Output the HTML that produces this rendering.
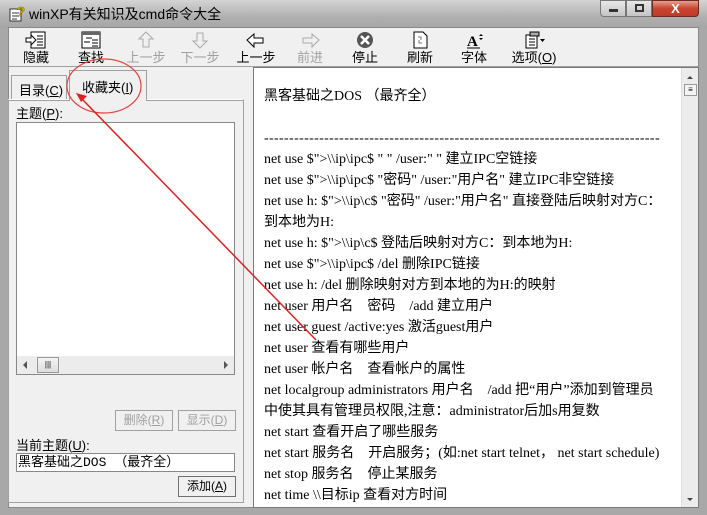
<!DOCTYPE html>
<html><head><meta charset="utf-8"><style>
*{margin:0;padding:0;box-sizing:border-box}
body{width:707px;height:515px;overflow:hidden;background:#a8a8a8;font-family:"Liberation Sans","Noto Sans CJK SC",sans-serif;font-size:12px;position:relative}
.abs{position:absolute}
#title{left:0;top:0;width:707px;height:28px;background:linear-gradient(#d4d4d4,#b0b0b0 60%,#a6a6a6)}
#client{left:8px;top:27px;width:691px;height:481px;background:#f0f0f0;border:1px solid #8a8a8a}
.tb{position:absolute;top:3px;text-align:center;font-size:13px;color:#000;width:50px}
.tb .lab{position:absolute;top:16px;left:0;width:100%}
.dis{color:#a0a0a0}
#content{left:253px;top:67px;width:446px;height:441px;background:#fff;border:1px solid #7a7a7a}
#txt{position:absolute;left:10px;top:18px;font-family:"Liberation Serif","Noto Sans CJK SC",serif;font-size:14px;line-height:21px;letter-spacing:0;color:#000;white-space:nowrap}
.sb{left:681px;top:68px;width:17px;height:439px;background:#ececec;border-left:1px solid #ddd}
.btn{position:absolute;height:21px;border:1px solid #a0a0a0;background:#f0f0f0;font-size:12px;text-align:center;line-height:19px}
</style></head><body>
<div class="abs" id="title"></div>
<svg class="abs" style="left:8px;top:5px" width="18" height="18"><rect x="2" y="4" width="11" height="12" fill="#fff" stroke="#333"/><path d="M4 8h7M4 11h7M4 14h5" stroke="#333"/><text x="9" y="11" font-size="13" font-weight="bold" fill="#e8c000" stroke="#6a5500" stroke-width=".5" font-family="Liberation Sans">?</text></svg>
<div class="abs" style="left:29px;top:4px;font-size:14px;color:#000">winXP有关知识及cmd命令大全</div>
<div class="abs" style="left:600px;top:0;width:26px;height:17px;border:1px solid #777;border-radius:0 0 0 4px;background:linear-gradient(#e8e8e8,#c4c4c4)"><div style="position:absolute;left:8px;top:8px;width:9px;height:3px;background:#333"></div></div>
<div class="abs" style="left:626px;top:0;width:26px;height:17px;border:1px solid #777;background:linear-gradient(#e8e8e8,#c4c4c4)"><div style="position:absolute;left:8px;top:3px;width:9px;height:8px;border:2px solid #333"></div></div>
<div class="abs" style="left:652px;top:0;width:47px;height:17px;border:1px solid #6a2a20;border-radius:0 0 4px 0;background:linear-gradient(#e8a090,#c84530 50%,#c03a28);color:#fff;font-weight:bold;text-align:center;font-size:13px;line-height:15px">X</div>
<div class="abs" id="client">
 <div class="tb" style="left:2px"><svg width="22" height="18"><rect x="6" y="1" width="14" height="16" fill="#fff" stroke="#000"/><path d="M12 5h6M12 8h6M12 11h6M12 14h6" stroke="#000"/><path d="M1 7h5V4l5 5-5 5v-3H1z" fill="#fff" stroke="#000"/></svg><div class="lab">隐藏</div></div>
 <div class="tb" style="left:57px"><svg width="22" height="18"><rect x="2" y="1" width="18" height="16" fill="#fff" stroke="#000"/><rect x="2" y="1" width="18" height="3" fill="#666"/><path d="M6 7h6M10 11h-6M12 9h6M12 12h6M12 15h6" stroke="#000"/></svg><div class="lab">查找</div></div>
 <div class="tb dis" style="left:112px"><svg width="22" height="18"><path d="M11 1l7 7h-4v8h-6v-8h-4z" fill="none" stroke="#aaa"/></svg><div class="lab">上一步</div></div>
 <div class="tb dis" style="left:166px"><svg width="22" height="18"><path d="M11 17l7-7h-4v-8h-6v8h-4z" fill="none" stroke="#aaa"/></svg><div class="lab">下一步</div></div>
 <div class="tb" style="left:222px"><svg width="22" height="18"><path d="M2 9l7-6v4h9v5h-9v4z" fill="#fff" stroke="#000"/></svg><div class="lab">上一步</div></div>
 <div class="tb dis" style="left:276px"><svg width="22" height="18"><path d="M20 9l-7-6v4h-9v5h9v4z" fill="none" stroke="#aaa"/></svg><div class="lab">前进</div></div>
 <div class="tb" style="left:331px"><svg width="22" height="18"><circle cx="11" cy="9" r="8" fill="#555"/><path d="M7 5l8 8M15 5l-8 8" stroke="#fff" stroke-width="2.5"/></svg><div class="lab">停止</div></div>
 <div class="tb" style="left:386px"><svg width="22" height="18"><path d="M5 1h9l4 4v12h-13z" fill="#fff" stroke="#000"/><path d="M9 6h3v3M13 12h-3v-3" stroke="#777" fill="none"/></svg><div class="lab">刷新</div></div>
 <div class="tb" style="left:440px"><svg width="22" height="18"><text x="4" y="15" font-size="15" font-family="Liberation Serif" font-weight="bold">A</text><path d="M4 17h13" stroke="#000"/><path d="M18 3l2 2h-4zM18 9l2-2h-4z" fill="#000"/></svg><div class="lab">字体</div></div>
 <div class="tb" style="left:495px;width:60px"><svg width="26" height="18"><rect x="5" y="4" width="11" height="13" fill="#fff" stroke="#000"/><path d="M8 8h6M8 11h6M8 14h6" stroke="#000"/><rect x="9" y="1" width="9" height="4" fill="#aaa" stroke="#000"/><path d="M19 8h5l-2.5 3z" fill="#000"/></svg><div class="lab">选项(<u>O</u>)</div></div>
 <div style="position:absolute;left:0;top:38px;width:689px;height:1px;background:#a0a0a0"></div>
</div>
<div class="abs" style="left:11px;top:75px;width:56px;height:24px;border:1px solid #a0a0a0;border-bottom:none;background:#f0f0f0;font-size:13px;padding:4px 0 0 7px">目录(<u>C</u>)</div>
<div class="abs" style="left:69px;top:70px;width:78px;height:31px;border:1px solid #a0a0a0;border-bottom:none;background:#f0f0f0;font-size:13px;padding:6px 0 0 12px;z-index:2">收藏夹(<u>I</u>)</div>
<div class="abs" style="left:8px;top:99px;width:236px;height:404px;border:1px solid #a0a0a0;border-top:1px solid #fff;box-shadow:inset 0 1px 0 #a0a0a0"></div>
<div class="abs" style="left:16px;top:103px;font-size:13px">主题(<u>P</u>):</div>
<div class="abs" style="left:16px;top:122px;width:219px;height:253px;background:#fff;border:1px solid #888"></div>
<div class="abs" style="left:17px;top:356px;width:217px;height:18px;background:#ececec"><div style="position:absolute;left:20px;top:1px;width:22px;height:16px;border:1px solid #999;background:linear-gradient(#f4f4f4,#ddd);font-size:8px;text-align:center;line-height:14px">|||</div><div style="position:absolute;left:6px;top:5px;border:4px solid transparent;border-right-color:#555;border-left:0"></div><div style="position:absolute;right:6px;top:5px;border:4px solid transparent;border-left-color:#555;border-right:0"></div></div>
<div class="btn" style="left:115px;top:410px;width:58px;color:#a0a0a0">删除(<u>R</u>)</div>
<div class="btn" style="left:178px;top:410px;width:58px;color:#a0a0a0">显示(<u>D</u>)</div>
<div class="abs" style="left:16px;top:435px;font-size:13px">当前主题(<u>U</u>):</div>
<div class="abs" style="left:16px;top:453px;width:219px;height:19px;background:#fff;border:1px solid #888;font-size:13px;line-height:17px;padding-left:1px;font-family:'Liberation Mono','Noto Sans CJK SC',monospace">黑客基础之DOS （最齐全）</div>
<div class="btn" style="left:178px;top:476px;width:58px;border-color:#707070;color:#000">添加(<u>A</u>)</div>
<div class="abs" id="content"><div id="txt">
<div>黑客基础之DOS （最齐全）</div><div>&nbsp;</div>
<div style="letter-spacing:0.35px">-------------------------------------------------------------------------------</div>
<div>net use $"&gt;\\ip\ipc$ " " /user:" " 建立IPC空链接</div>
<div>net use $"&gt;\\ip\ipc$ "密码" /user:"用户名" 建立IPC非空链接</div>
<div>net use h: $"&gt;\\ip\c$ "密码" /user:"用户名" 直接登陆后映射对方C：</div>
<div>到本地为H:</div>
<div>net use h: $"&gt;\\ip\c$ 登陆后映射对方C：到本地为H:</div>
<div>net use $"&gt;\\ip\ipc$ /del 删除IPC链接</div>
<div>net use h: /del 删除映射对方到本地的为H:的映射</div>
<div>net user 用户名　密码　/add 建立用户</div>
<div>net user guest /active:yes 激活guest用户</div>
<div>net user 查看有哪些用户</div>
<div>net user 帐户名　查看帐户的属性</div>
<div>net localgroup administrators 用户名　/add 把“用户”添加到管理员</div>
<div>中使其具有管理员权限,注意：administrator后加s用复数</div>
<div>net start 查看开启了哪些服务</div>
<div>net start 服务名　开启服务；(如:net start telnet， net start schedule)</div>
<div>net stop 服务名　停止某服务</div>
<div>net time \\目标ip 查看对方时间</div>
</div></div>
<div class="abs sb"><div style="position:absolute;left:5px;top:8px;border:3px solid transparent;border-bottom-color:#444;border-top:0"></div><div style="position:absolute;left:2px;top:16px;width:13px;height:12px;border:1px solid #999;background:#f4f4f4;font-size:8px;line-height:10px;text-align:center">≡</div><div style="position:absolute;left:5px;bottom:6px;border:3px solid transparent;border-top-color:#444;border-bottom:0"></div></div>
<svg class="abs" style="left:0;top:0;z-index:5" width="707" height="515"><ellipse cx="104" cy="86" rx="37" ry="27" fill="none" stroke="#e84040" stroke-width="1.2"/><path d="M316 340L82 99" stroke="#e02020" stroke-width="1.5"/><path d="M76 93l11 3-6 6z" fill="#e02020"/></svg>
</body></html>
